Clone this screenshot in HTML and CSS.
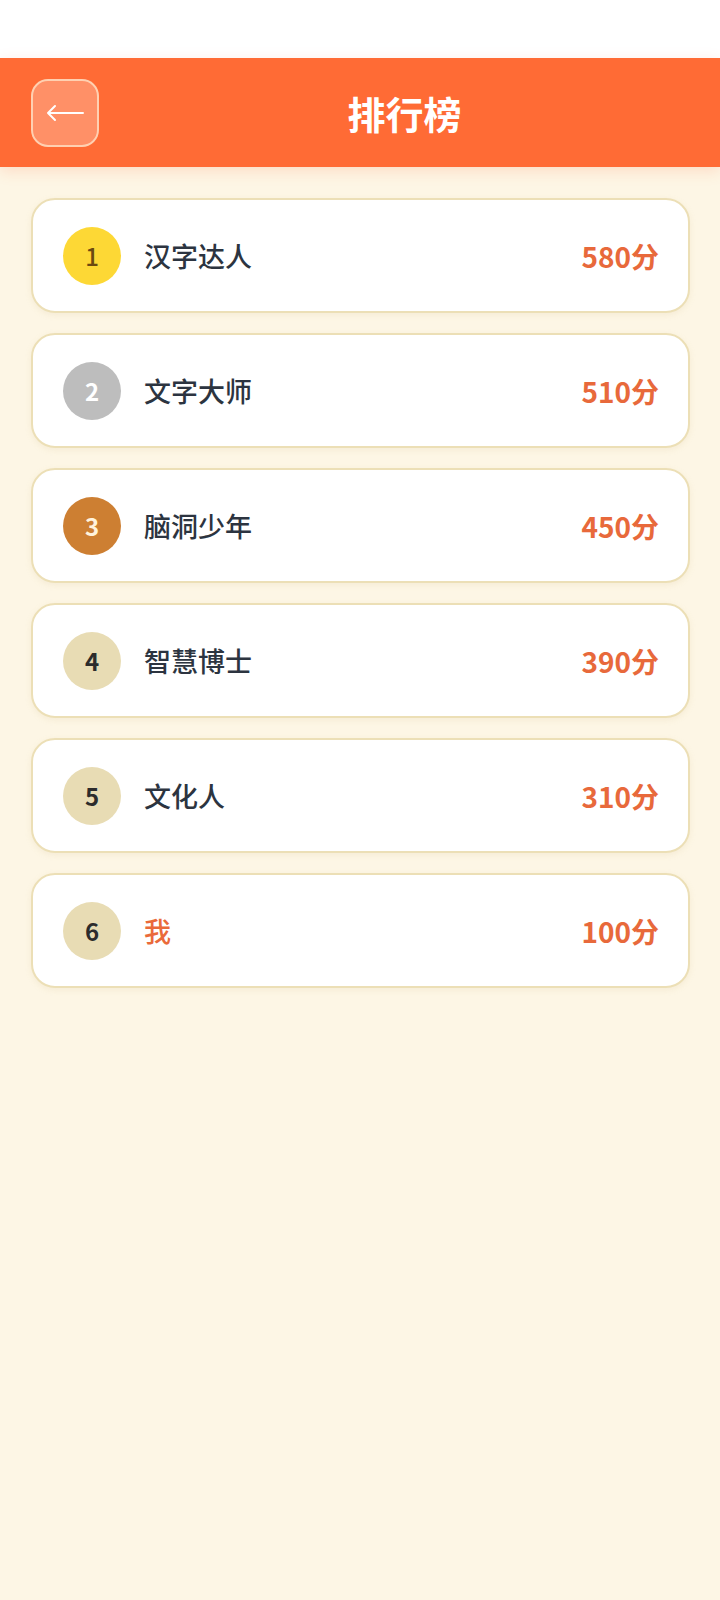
FILE: index.html
```html
<!DOCTYPE html>
<html lang="zh">
<head>
<meta charset="utf-8">
<title>排行榜</title>
<link rel="stylesheet" href="styles.css">
</head>
<body>
<div class="status"></div>
<header class="topbar">
  <button class="back" aria-label="返回"><svg class="arrow" viewBox="0 0 38 20" width="38" height="20"><path d="M37 10H2M9 3L2 10L9 17" fill="none" stroke="#ffffff" stroke-width="2" stroke-linecap="round" stroke-linejoin="round"/></svg></button>
  <h1 class="title">排行榜</h1>
</header>
<main class="list">
  <div class="card"><span class="rank r1">1</span><span class="name">汉字达人</span><span class="score">580分</span></div>
  <div class="card"><span class="rank r2">2</span><span class="name">文字大师</span><span class="score">510分</span></div>
  <div class="card"><span class="rank r3">3</span><span class="name">脑洞少年</span><span class="score">450分</span></div>
  <div class="card"><span class="rank">4</span><span class="name">智慧博士</span><span class="score">390分</span></div>
  <div class="card"><span class="rank">5</span><span class="name">文化人</span><span class="score">310分</span></div>
  <div class="card"><span class="rank">6</span><span class="name me">我</span><span class="score">100分</span></div>
</main>
</body>
</html>
```
FILE: styles.css
```css
* { box-sizing: border-box; }
html, body { margin: 0; padding: 0; }
body {
  width: 720px;
  min-height: 1600px;
  background: #fdf6e5;
  font-family: "Noto Sans CJK SC", "Noto Sans", sans-serif;
}
.status { height: 58px; background: #ffffff; }
.topbar {
  height: 109px;
  background: #ff6b35;
  display: flex;
  align-items: center;
  padding: 0 10px 0 31px;
  box-shadow: 0 4px 14px rgba(255, 107, 53, 0.18);
  position: relative;
}
.back {
  width: 68px;
  height: 68px;
  border-radius: 17px;
  border: 2px solid rgba(255, 220, 190, 0.85);
  background: rgba(255, 255, 255, 0.25);
  display: flex;
  align-items: center;
  justify-content: center;
  padding: 0;
}
.arrow { display: block; }
.title {
  flex: 1;
  margin: 0;
  text-align: center;
  color: #ffffff;
  font-size: 38px;
  font-weight: 700;
  letter-spacing: 0;
}
.list {
  padding: 31px 30px 0 31px;
  display: flex;
  flex-direction: column;
  gap: 20px;
}
.card {
  height: 115px;
  background: #ffffff;
  border: 2px solid #ecdfb6;
  border-radius: 24px;
  display: flex;
  align-items: center;
  padding: 0 29px 0 30px;
  box-shadow: 0 2px 6px rgba(200, 180, 120, 0.15);
}
.rank {
  width: 58px;
  height: 58px;
  border-radius: 50%;
  background: #e8dcb4;
  color: #2c2c2c;
  display: flex;
  align-items: center;
  justify-content: center;
  font-size: 24px;
  font-weight: 600;
  flex: none;
}
.rank.r1 { background: #fdd835; color: #6b4a10; font-weight: 500; }
.rank.r2 { background: #bdbdbd; color: #ffffff; }
.rank.r3 { background: #cd7f32; color: #fff3dc; }
.name {
  margin-left: 23px;
  flex: 1;
  font-size: 27px;
  font-weight: 500;
  color: #2c3440;
}
.name.me { color: #ea6a3a; }
.score {
  font-size: 28px;
  font-weight: 600;
  color: #e8693b;
}
```
